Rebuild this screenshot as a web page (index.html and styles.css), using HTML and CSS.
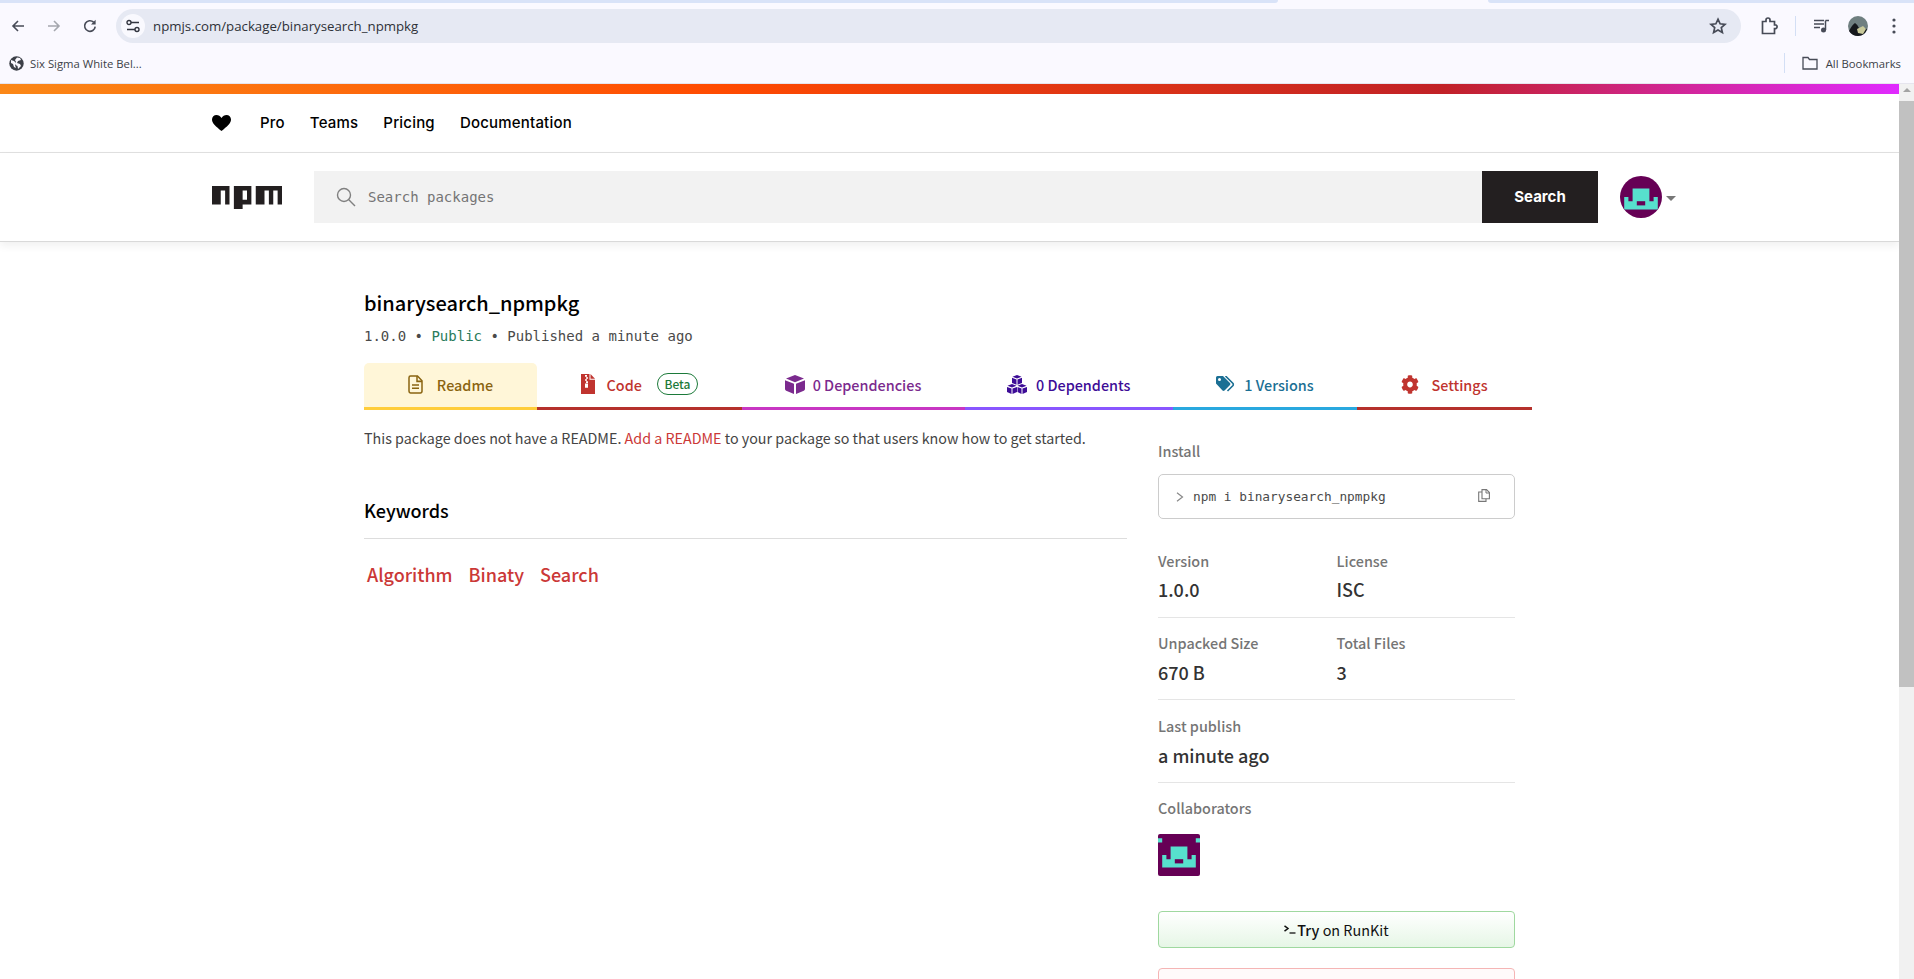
FILE: index.html
```html
<!DOCTYPE html>
<html lang="en">
<head>
    <meta charset="UTF-8">
    <title>binarysearch_npmpkg - npm</title>
    <link rel="stylesheet" href="styles.css">
</head>
<body>
<div class="browser">
    <div class="tabstrip"><span class="strip before"></span><span class="strip after"></span></div>
    <div class="toolbar">
        <svg class="tool" width="16" height="16" viewBox="0 0 16 16"><path d="M14 8H3M8 3L3 8l5 5" fill="none" stroke="#474b57" stroke-width="1.6"/></svg>
        <svg class="tool fwd" width="16" height="16" viewBox="0 0 16 16"><path d="M2 8h11M8 3l5 5-5 5" fill="none" stroke="#a5a7ae" stroke-width="1.6"/></svg>
        <svg class="tool reload" width="16" height="16" viewBox="0 0 16 16"><path d="M13.2 8.6A5.3 5.3 0 1 1 11.6 4.2" fill="none" stroke="#474b57" stroke-width="1.6"/><path d="M13.6 1.8v4.6H9z" fill="#474b57"/></svg>
        <div class="omnibox">
            <span class="siteinfo">
                <svg width="14" height="14" viewBox="0 0 14 14"><path d="M5 3.500h8M1 10.500h8" stroke="#333640" stroke-width="1.500"/><circle cx="3" cy="3.500" r="2" fill="#f9f9fe" stroke="#333640" stroke-width="1.400"/><circle cx="11" cy="10.500" r="2" fill="#f9f9fe" stroke="#333640" stroke-width="1.400"/></svg>
            </span>
            <span class="url">npmjs.com/package/binarysearch_npmpkg</span>
            <svg class="star" width="18" height="18" viewBox="0 0 18 18"><path d="M9 2.200l2.100 4.600 5 .5-3.800 3.300 1.100 4.900L9 13l-4.400 2.500 1.100-4.900-3.800-3.300 5-.5z" fill="none" stroke="#474b57" stroke-width="1.700"/></svg>
        </div>
        <svg class="ext" width="18" height="18" viewBox="0 0 18 18"><path d="M2.500 4.500H6V3a2 2 0 0 1 4 0v1.500h4.500V8H16a2 2 0 0 1 0 3.600h-1.500V16.500H2.500z" fill="none" stroke="#474b57" stroke-width="1.700"/></svg>
        <span class="sep"></span>
        <svg class="media" width="16" height="16" viewBox="0 0 16 16"><path d="M0 2.500h10M0 6h10M0 9.500h6" stroke="#474b57" stroke-width="1.500"/><path d="M11.500 2.500H15M11.500 2.500V12" stroke="#474b57" stroke-width="1.500" fill="none"/><circle cx="9.500" cy="12" r="2.500" fill="#474b57"/></svg>
        <svg class="me" width="20" height="20" viewBox="0 0 20 20"><circle cx="10" cy="10" r="10" fill="#6f7f80"/><path d="M1 15q3-6 6-8 3 2 4 5l8 1q-2 7-9 7-6 0-9-5z" fill="#15181c"/><path d="M9 13l6-3 3 3-3 5-5-1z" fill="#c8c99a"/></svg>
        <svg class="dots" width="4" height="18" viewBox="0 0 4 18"><circle cx="2" cy="3" r="1.600" fill="#474b57"/><circle cx="2" cy="9" r="1.600" fill="#474b57"/><circle cx="2" cy="15" r="1.600" fill="#474b57"/></svg>
    </div>
    <div class="bookmarks">
        <svg width="15" height="15" viewBox="0 0 15 15"><circle cx="7.500" cy="7.500" r="7.200" fill="#3c4048"/><path d="M2 4l3 1 2 2-1 2 1 3-2-1-1-3-2-1zM8 1.500l3 .5 1 2-3 1-1 2 3 1 1 2-3 3-.5-3-2-1 .5-3-1-2z" fill="#faf9ff"/></svg>
        <span class="bm">Six Sigma White Bel...</span>
        <span class="sep2"></span>
        <svg class="folder" width="16" height="14" viewBox="0 0 16 14"><path d="M1 1.500h5l1.500 2H15V13H1z" fill="none" stroke="#474b57" stroke-width="1.300"/></svg>
        <span class="allbm">All Bookmarks</span>
    </div>
</div>

<div class="viewport">
    <div class="page">
        <div class="rainbow"></div>
        <div class="topnav">
            <svg class="heart" width="19" height="16" viewBox="0 0 19 16"><path d="M9.500 16C4 11.500 0 8.500 0 4.500 0 1.800 2 0 4.500 0c2 0 3.800 1 5 3 1.200-2 3-3 5-3C17 0 19 1.800 19 4.500c0 4-4 7-9.500 11.500z" fill="#000"/></svg>
            <a class="navlink">Pro</a>
            <a class="navlink">Teams</a>
            <a class="navlink">Pricing</a>
            <a class="navlink">Documentation</a>
        </div>
        <div class="searchbar">
            <svg class="logo" width="70" height="23" viewBox="1 1 16 5" preserveAspectRatio="none"><path d="M1 5h2V2h1v3h1V1H1zM6 1v5h2V5h2V1zM8 2h1v2H8zM11 1v4h2V2h1v3h1V2h1v3h1V1z" fill="#231f20" fill-rule="evenodd"/></svg>
            <div class="searchbox">
                <svg width="20" height="20" viewBox="0 0 20 20"><circle cx="8" cy="8" r="6.500" fill="none" stroke="#808080" stroke-width="1.400"/><path d="M12.800 12.800L19 19" stroke="#808080" stroke-width="1.400"/></svg>
                <span class="placeholder">Search packages</span>
            </div>
            <div class="searchbtn">Search</div>
            <svg class="avatar round" width="42" height="42" viewBox="0 0 42 42"><rect width="42" height="42" fill="#660055"/><path d="M12.600 12.600H29.400V25.200H33.600V21H37.800V33.600H4.200V21H8.400V25.200H12.600z" fill="#57e0cd"/><rect x="16.800" y="25.200" width="8.400" height="4.200" fill="#660055"/></svg>
            <span class="caret"></span>
        </div>
        <div class="content">
            <h1 class="pkgname">binarysearch_npmpkg</h1>
            <div class="pkgmeta">1.0.0 • <span class="public">Public</span> • Published a minute ago</div>
            <ul class="tabs">
                <li class="tab readme">
                    <svg width="15" height="19" viewBox="0 0 15 18" preserveAspectRatio="none"><path d="M1 2.500A1.500 1.500 0 0 1 2.500 1H9.500L14 5.500V15.500A1.500 1.500 0 0 1 12.500 17H2.500A1.500 1.500 0 0 1 1 15.500z" fill="none" stroke="currentColor" stroke-width="1.500"/><path d="M9 1v5h5M4 9.500h7M4 12.500h7" fill="none" stroke="currentColor" stroke-width="1.500"/></svg>
                    Readme
                </li>
                <li class="tab code">
                    <svg width="14" height="20" viewBox="0 0 14 19" preserveAspectRatio="none"><path d="M0 0h8.500v5.500H14V19H0z" fill="currentColor"/><path d="M9.500 0L14 4.500H9.500z" fill="currentColor"/><path d="M4 1h2v1.500H4zM5 3h2v1.500H5zM4 5h2v1.500H4zM5 7h2v1.500H5zM4 9h3v4H4z" fill="#fff"/></svg>
                    Code
                    <span class="beta">Beta</span>
                </li>
                <li class="tab deps">
                    <svg width="20" height="19" viewBox="0 0 20 20" preserveAspectRatio="none"><path d="M10 0l9 3.800L10 7.500 1 3.800z" fill="currentColor"/><path d="M0 5.500l9 3.800V20L1.200 16.500Q0 16 0 14.800z" fill="currentColor"/><path d="M20 5.500l-9 3.800V20l7.800-3.500q1.200-.5 1.200-1.700z" fill="currentColor"/></svg>
                    0 Dependencies
                </li>
                <li class="tab dependents">
                    <svg width="20" height="19" viewBox="0 0 20 20" preserveAspectRatio="none"><g fill="currentColor"><path d="M10 0l4.500 1.800L10 3.600 5.500 1.800zM5 3l4.500 1.800v5.400L5 8.400zM15 3l-4.500 1.800v5.400L15 8.400z"/><path d="M5 9.500l4.500 1.800L5 13.100.5 11.300zM0 12.500l4.500 1.800V20L0 18zM10 12.500l-4.500 1.800V20L10 18z"/><path d="M15 9.500l4.500 1.800L15 13.100l-4.500-1.800zM10.500 12.500l4 1.800V20l-4-2zM20 12.500l-4.500 1.800V20L20 18z"/></g></svg>
                    0 Dependents
                </li>
                <li class="tab versions">
                    <svg width="19" height="16" viewBox="0 0 19 16"><path d="M0 1.500A1.500 1.500 0 0 1 1.500 0H7l7 7a1.500 1.500 0 0 1 0 2l-5.500 5.500a1.500 1.500 0 0 1-2 0L0 7.500zM3.500 5a1.500 1.500 0 1 0 0-3 1.500 1.500 0 0 0 0 3z" fill="currentColor" fill-rule="evenodd"/><path d="M9.500 0l7.500 7.500a2 2 0 0 1 0 2L11.500 15" fill="none" stroke="currentColor" stroke-width="1.600"/></svg>
                    1 Versions
                </li>
                <li class="tab settings">
                    <svg width="18" height="19" viewBox="0 0 512 512" preserveAspectRatio="none"><path fill="currentColor" d="M487.4 315.700l-42.600-24.600c4.300-23.200 4.300-47 0-70.200l42.600-24.600c4.900-2.800 7.100-8.600 5.500-14-11.100-35.600-30-67.800-54.700-94.600-3.800-4.100-10-5.100-14.800-2.300L380.800 110c-17.900-15.400-38.500-27.300-60.800-35.100V25.800c0-5.600-3.900-10.500-9.400-11.700-36.700-8.200-74.300-7.800-109.200 0-5.500 1.200-9.400 6.100-9.400 11.700V75c-22.200 7.900-42.800 19.800-60.800 35.100L88.700 85.500c-4.900-2.800-11-1.900-14.800 2.300-24.700 26.700-43.600 58.900-54.700 94.600-1.700 5.400.6 11.200 5.500 14L67.300 221c-4.300 23.200-4.300 47 0 70.200l-42.600 24.600c-4.900 2.800-7.100 8.600-5.500 14 11.100 35.600 30 67.800 54.700 94.600 3.800 4.100 10 5.100 14.800 2.300l42.600-24.600c17.900 15.400 38.500 27.300 60.800 35.100v49.200c0 5.600 3.900 10.500 9.400 11.700 36.700 8.200 74.300 7.800 109.200 0 5.500-1.200 9.400-6.100 9.400-11.700v-49.200c22.200-7.900 42.800-19.800 60.800-35.100l42.600 24.600c4.900 2.800 11 1.900 14.800-2.300 24.700-26.700 43.600-58.900 54.700-94.600 1.500-5.500-.7-11.300-5.600-14.100zM256 336c-44.100 0-80-35.900-80-80s35.900-80 80-80 80 35.900 80 80-35.900 80-80 80z"/></svg>
                    Settings
                </li>
            </ul>
            <div class="columns">
                <div class="leftcol">
                    <p class="noreadme">This package does not have a README. <a class="redlink">Add a README</a> to your package so that users know how to get started.</p>
                    <h2 class="kwtitle">Keywords</h2>
                    <ul class="keywords">
                        <li>Algorithm</li>
                        <li>Binaty</li>
                        <li>Search</li>
                    </ul>
                </div>
                <div class="sidebar">
                    <h3 class="label">Install</h3>
                    <div class="install">
                        <svg width="8" height="10" viewBox="0 0 8 10"><path d="M1 .8L6.500 5 1 9.200" fill="none" stroke="#888" stroke-width="1.200"/></svg>
                        <code class="cmd">npm i binarysearch_npmpkg</code>
                        <svg class="copy" width="12" height="13" viewBox="0 0 12 13"><path d="M4 .6h4.500L11.400 3.500v6.200H4z" fill="none" stroke="#777" stroke-width="1.100"/><path d="M8 .6v3.400h3.400" fill="none" stroke="#777" stroke-width="1"/><path d="M4 3H.7v9.400h7.300V9.700" fill="none" stroke="#777" stroke-width="1.100"/></svg>
                    </div>
                    <div class="statrow first">
                        <div class="stat"><h3 class="label">Version</h3><p class="value">1.0.0</p></div>
                        <div class="stat"><h3 class="label">License</h3><p class="value">ISC</p></div>
                    </div>
                    <div class="statrow tight">
                        <div class="stat"><h3 class="label">Unpacked Size</h3><p class="value">670 B</p></div>
                        <div class="stat"><h3 class="label">Total Files</h3><p class="value">3</p></div>
                    </div>
                    <div class="statrow">
                        <div class="stat"><h3 class="label">Last publish</h3><p class="value">a minute ago</p></div>
                    </div>
                    <h3 class="label collab">Collaborators</h3>
                    <svg class="avatar square" width="42" height="42" viewBox="0 0 42 42"><rect width="42" height="42" fill="#660055"/><path d="M0 4.200h4.200v4.200H0zM37.800 4.200H42v4.200h-4.200z" fill="#57e0cd"/><path d="M12.600 12.600H29.400V25.200H33.600V21H37.800V33.600H4.200V21H8.400V25.200H12.600z" fill="#57e0cd"/><rect x="16.800" y="25.200" width="8.400" height="4.200" fill="#660055"/></svg>
                    <div class="btn runkit">
                        <svg width="12" height="9" viewBox="0 0 12 9"><path d="M.5 .8L4 3.500.5 6.200" fill="none" stroke="#111" stroke-width="1.500"/><path d="M5.500 8h6" stroke="#111" stroke-width="1.300"/></svg>
                        <span><b>Try</b> on RunKit</span>
                    </div>
                    <div class="btn report"></div>
                </div>
            </div>
        </div>
    </div>
    <div class="scrollbar">
        <span class="uparrow"></span>
        <span class="thumb"></span>
    </div>
</div>
</body>
</html>
```

FILE: styles.css
```css
* {
    padding: 0;
    margin: 0;
    list-style: none;
    box-sizing: border-box;
}

html, body {
    height: 979px;
    overflow: hidden;
    background: #fff;
}

body {
    font-family: "Noto Sans CJK SC", "Noto Sans", sans-serif;
    color: #333;
}

/* browser chrome */
.browser {
    height: 84px;
    background: #faf9ff;
    border-bottom: 1px solid #e6e5ee;
    font-family: "Open Sans", "Liberation Sans", sans-serif;
}

.tabstrip {
    height: 3px;
    display: flex;
    justify-content: space-between;
}

.strip {
    height: 3px;
    background: #d9e3f8;
}

.strip.before {
    width: 1278px;
    border-radius: 0 0 5px 0;
}

.strip.after {
    width: 426px;
    border-radius: 0 0 0 5px;
}

.toolbar {
    height: 34px;
    margin-top: 6px;
    display: flex;
    align-items: center;
}

.tool {
    margin-left: 10px;
    flex: none;
}

.fwd {
    margin-left: 20px;
}

.reload {
    margin-left: 20px;
}

.omnibox {
    width: 1625px;
    height: 34px;
    margin-left: 18px;
    padding-left: 5px;
    background: #e6e9f3;
    border-radius: 17px;
    display: flex;
    align-items: center;
}

.siteinfo {
    width: 24px;
    height: 24px;
    border-radius: 50%;
    background: #f9f9fe;
    display: flex;
    align-items: center;
    justify-content: center;
}

.url {
    margin-left: 8px;
    flex: 1;
    font-size: 13.250px;
    color: #2f3138;
    line-height: 20px;
}

.star {
    margin-right: 14px;
}

.ext {
    margin-left: 19px;
}

.sep {
    width: 1px;
    height: 20px;
    margin-left: 17px;
    background: #d3dff5;
}

.media {
    margin-left: 18px;
}

.me {
    margin-left: 18px;
}

.dots {
    margin-left: 24px;
}

.bookmarks {
    height: 40px;
    display: flex;
    align-items: center;
    padding: 0 13px 0 9px;
    font-size: 11.300px;
    color: #3c3f47;
}

.bm {
    margin-left: 6px;
    flex: 1;
}

.sep2 {
    width: 1px;
    height: 20px;
    background: #d3dff5;
}

.folder {
    margin-left: 17px;
}

.allbm {
    margin-left: 8px;
}

/* page */
.viewport {
    display: flex;
    height: 895px;
}

.page {
    flex: 1;
    min-width: 0;
    overflow: hidden;
}

.scrollbar {
    width: 15px;
    background: #f1f1f1;
    display: flex;
    flex-direction: column;
    align-items: center;
}

.uparrow {
    margin-top: 4px;
    border-left: 4px solid transparent;
    border-right: 4px solid transparent;
    border-bottom: 4px solid #a3a3a3;
}

.thumb {
    width: 15px;
    height: 586px;
    margin-top: 9px;
    background: #c1c1c1;
}

.rainbow {
    height: 10px;
    background: linear-gradient(90deg, #fb8817 0%, #ff4b01 38%, #c12127 76%, #e02aff 100%);
}

.topnav {
    height: 59px;
    padding: 0 0 1px 212px;
    border-bottom: 1px solid #e1e1e1;
    display: flex;
    align-items: center;
}

.heart {
    margin-right: 29px;
}

.navlink {
    margin-right: 25px;
    font-family: Inter, "Liberation Sans", sans-serif;
    font-size: 15px;
    font-weight: 500;
    letter-spacing: .2px;
    color: #000;
}

.searchbar {
    height: 89px;
    padding-left: 212px;
    border-bottom: 1px solid #d9d9d9;
    box-shadow: 0 4px 8px rgba(0, 0, 0, .06);
    display: flex;
    align-items: center;
    position: relative;
}

.logo {
    flex: none;
}

.searchbox {
    width: 1168px;
    height: 52px;
    margin-left: 32px;
    padding-left: 22px;
    background: #f2f2f2;
    display: flex;
    align-items: center;
}

.placeholder {
    margin-left: 12px;
    font-family: "DejaVu Sans Mono", "Liberation Mono", monospace;
    font-size: 14px;
    color: #757575;
}

.searchbtn {
    width: 116px;
    height: 52px;
    line-height: 52px;
    text-align: center;
    background: #231f20;
    color: #fff;
    font-family: Inter, "Liberation Sans", sans-serif;
    font-size: 15px;
    font-weight: 700;
}

.round {
    margin-left: 22px;
    border-radius: 50%;
}

.caret {
    margin-left: 4px;
    margin-top: 2px;
    border-left: 5px solid transparent;
    border-right: 5px solid transparent;
    border-top: 5px solid #777;
}

.content {
    width: 1532px;
    padding: 46px 0 0 364px;
}

.pkgname {
    font-size: 20px;
    line-height: 30px;
    font-weight: 500;
    color: #000;
}

.pkgmeta {
    margin-top: 8px;
    font-family: "DejaVu Sans Mono", "Liberation Mono", monospace;
    font-size: 14px;
    line-height: 20px;
    color: #4a4a4a;
}

.public {
    color: #2a7a5a;
}

.tabs {
    height: 47px;
    margin-top: 17px;
    display: flex;
}

.tab {
    height: 47px;
    padding-bottom: 2px;
    border-bottom: 3px solid;
    display: flex;
    align-items: center;
    justify-content: center;
    font-size: 14.400px;
    font-weight: 500;
}

.readme {
    width: 173px;
    gap: 14px;
    background: #fff6d8;
    border-radius: 5px 5px 0 0;
    border-color: #ffcd3a;
    color: #8a6410;
}

.code {
    width: 204.500px;
    gap: 12px;
    border-color: #b5312c;
    color: #c0342f;
}

.deps {
    width: 223px;
    gap: 8px;
    border-color: #c836c3;
    color: #7b2a8e;
}

.dependents {
    width: 208.500px;
    gap: 9px;
    border-color: #8956ff;
    color: #3d0c97;
}

.versions {
    width: 184px;
    gap: 9px;
    border-color: #29a8df;
    color: #1b6f94;
}

.settings {
    width: 175px;
    gap: 12px;
    border-color: #b5312c;
    color: #c0342f;
}

.beta {
    margin-left: 3px;
    width: 41px;
    height: 22px;
    line-height: 20px;
    border: 1px solid #1c7a3a;
    border-radius: 11px;
    text-align: center;
    font-size: 12px;
    color: #1c7a3a;
}

.columns {
    display: grid;
    grid-template-columns: 763px 357px;
    column-gap: 31px;
}

.noreadme {
    margin-top: 16px;
    font-size: 14.300px;
    line-height: 24px;
    color: #444;
}

.redlink {
    color: #cb3837;
}

.kwtitle {
    margin-top: 45px;
    padding-bottom: 13px;
    border-bottom: 1px solid #ddd;
    font-size: 18px;
    line-height: 30px;
    font-weight: 500;
    color: #000;
}

.keywords {
    margin-top: 21px;
    display: flex;
    gap: 16px;
    padding-left: 3px;
}

.keywords li {
    font-size: 18px;
    line-height: 28px;
    font-weight: 500;
    color: #cb3837;
}

.sidebar {
    padding-top: 31px;
}

.label {
    font-size: 14.400px;
    line-height: 20px;
    font-weight: 500;
    color: #757575;
}

.install {
    height: 45px;
    margin-top: 13px;
    padding: 0 24px 0 17px;
    border: 1px solid #ccc;
    border-radius: 5px;
    display: flex;
    align-items: center;
}

.cmd {
    margin-left: 9px;
    flex: 1;
    font-family: "DejaVu Sans Mono", "Liberation Mono", monospace;
    font-size: 12.800px;
    color: #4a4a4a;
}

.copy {
    margin-top: -3px;
}

.statrow {
    display: flex;
    padding: 16px 0 14px;
    border-bottom: 1px solid #e5e5e5;
}

.statrow.first {
    margin-top: 17px;
    padding: 15px 0;
}

.statrow.first .value {
    margin-top: 5px;
}

.statrow.tight {
    padding-top: 15px;
}

.stat {
    width: 179px;
}

.value {
    margin-top: 6px;
    font-size: 18px;
    line-height: 26px;
    font-weight: 500;
    color: #333;
}

.collab {
    margin-top: 15px;
}

.square {
    display: block;
    margin-top: 16px;
    border-radius: 2px;
}

.btn {
    height: 37px;
    border-radius: 4px;
    display: flex;
    align-items: center;
    justify-content: center;
    gap: 1px;
    font-size: 14.400px;
    color: #111;
}

.btn b {
    font-weight: 500;
}

.runkit {
    margin-top: 35px;
    border: 1px solid #9fd89f;
    background: linear-gradient(#fff, #e6f6e6);
}

.report {
    height: 60px;
    margin-top: 20px;
    border: 1px solid #f5b5b5;
    background: #fffafa;
}
```
